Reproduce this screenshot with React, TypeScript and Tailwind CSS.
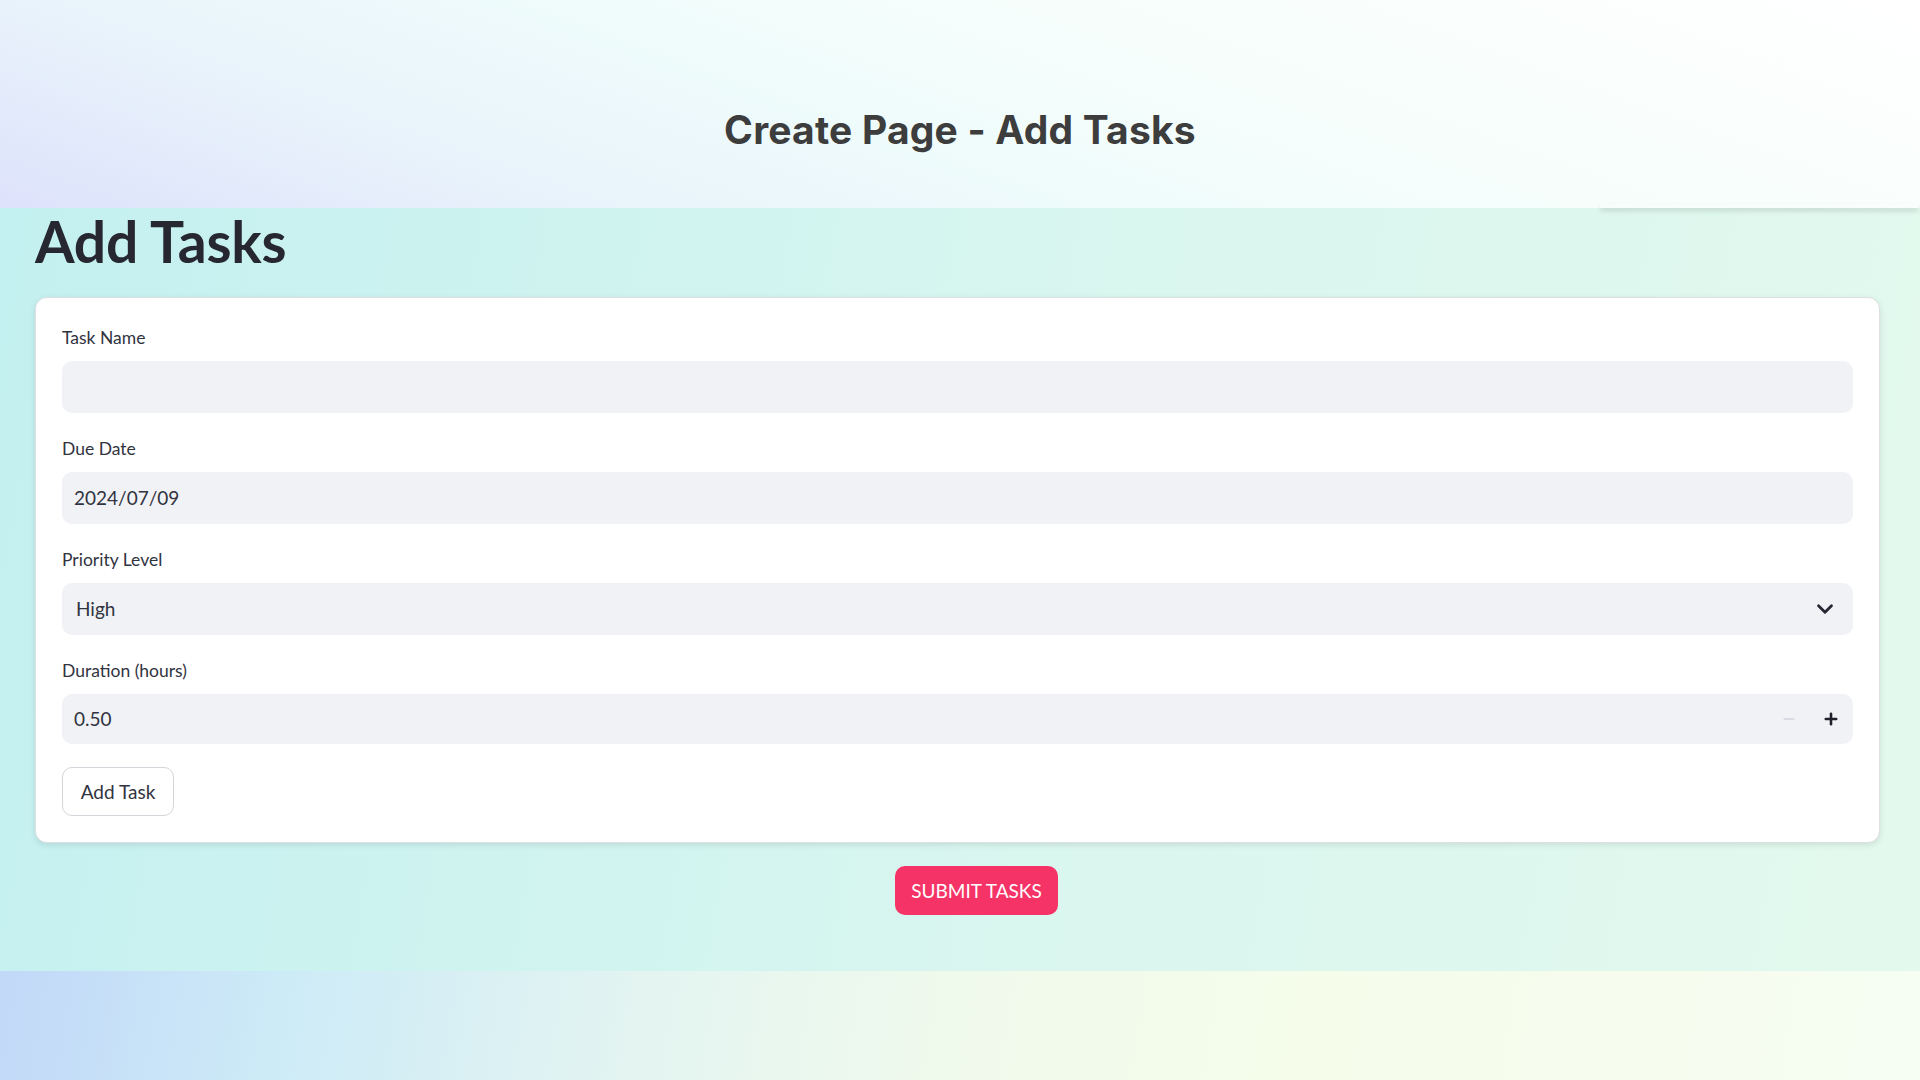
import { ChevronDown, Minus, Plus } from 'lucide-react';

const labelCls = "block text-[17.5px] leading-[28px] text-[#31333f] mb-[9px]";
const fieldCls = "w-full h-[52px] rounded-[10px] bg-[#f0f2f6] flex items-center text-[19px] text-[#31333f]";

const App = () => {
    return (
        <div className="w-full h-[1080px] flex flex-col font-['Lato',sans-serif] overflow-hidden">
            {/* top banner */}
            <header className="relative h-[208px] shrink-0 flex justify-center pt-[110px] bg-[linear-gradient(20deg,#dde2fb_0%,#e8f2fb_22%,#effcfb_45%,#f8fefc_70%,#ffffff_100%)]">
                <h1 className="h-fit text-[39px] leading-none font-bold text-[#3d3d3d] font-['Inter',sans-serif] tracking-[0.2px]">
                    Create Page - Add Tasks
                </h1>
                <div className="absolute left-[1600px] right-[2px] bottom-0 h-[4px] shadow-[0_3px_5px_rgba(0,0,0,0.14)]" />
            </header>

            <main className="h-[763px] shrink-0 pl-[35px] pr-[2px] bg-[linear-gradient(100deg,#c3f0f0_0%,#cdf3f0_25%,#d9f6ef_55%,#e3f9ee_100%)]">
                <h1 className="text-[57px] leading-[1.18] font-bold text-[#262730] tracking-[-0.2px]">Add Tasks</h1>

                <div className="mt-[22px] w-[1845px] bg-white rounded-[12px] border border-[#dedfe2] shadow-[0_2px_6px_rgba(0,0,0,0.10)] px-[26px] py-[26px]">
                    <div>
                        <label className={labelCls}>Task Name</label>
                        <div className={fieldCls}></div>
                    </div>

                    <div className="mt-[22px]">
                        <label className={labelCls}>Due Date</label>
                        <div className={fieldCls + " pl-[12px]"}>2024/07/09</div>
                    </div>

                    <div className="mt-[22px]">
                        <label className={labelCls}>Priority Level</label>
                        <div className={fieldCls + " pl-[14px] pr-[15px] justify-between"}>
                            <span>High</span>
                            <ChevronDown size={26} strokeWidth={2.6} className="text-[#262730]" />
                        </div>
                    </div>

                    <div className="mt-[22px]">
                        <label className={labelCls}>Duration (hours)</label>
                        <div className="w-full h-[50px] rounded-[10px] bg-[#f0f2f6] flex items-center text-[19px] text-[#31333f] pl-[12px] pr-[12px]">
                            <span className="flex-1">0.50</span>
                            <span className="w-[20px] flex justify-center">
                                <Minus size={16} strokeWidth={2.5} className="text-[#cfd3dc]" />
                            </span>
                            <span className="w-[20px] ml-[22px] flex justify-center">
                                <Plus size={18} strokeWidth={3.4} className="text-[#1f2029]" />
                            </span>
                        </div>
                    </div>

                    <button className="mt-[23px] w-[112px] h-[49px] rounded-[10px] border border-[#d4d5da] bg-white text-[19px] text-[#31333f]">
                        Add Task
                    </button>
                </div>

                <div className="flex justify-center mt-[23px]">
                    <button className="w-[163px] h-[49px] rounded-[10px] bg-[#f63366] text-white text-[19px] uppercase">
                        Submit Tasks
                    </button>
                </div>
            </main>

            <footer className="flex-1 bg-[linear-gradient(100deg,#c2d8f8_0%,#cdebf7_15%,#e3f4f1_33%,#f0faec_50%,#f5fcea_68%,#f6fdf2_100%)]" />
        </div>
    );
};

export default App;
